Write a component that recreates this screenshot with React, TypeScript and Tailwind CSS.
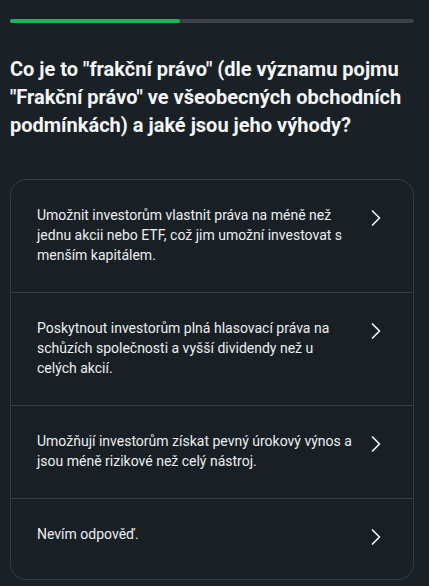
const answers = [
  "Umožnit investorům vlastnit práva na méně než jednu akcii nebo ETF, což jim umožní investovat s menším kapitálem.",
  "Poskytnout investorům plná hlasovací práva na schůzích společnosti a vyšší dividendy než u celých akcií.",
  "Umožňují investorům získat pevný úrokový výnos a jsou méně rizikové než celý nástroj.",
  "Nevím odpověď.",
]

function Chevron() {
  return (
    <svg width="24" height="24" viewBox="0 0 24 24" fill="none" className="mt-px shrink-0">
      <polyline points="8.5,5 15.5,12 8.5,19" stroke="#f1f3f4" strokeWidth="1.7" strokeLinecap="round" strokeLinejoin="round" />
    </svg>
  )
}

export default function App() {
  return (
    <div className="min-h-screen bg-[#1a2126] pl-[10px] pr-[15px] pt-[19px] font-['Roboto',sans-serif]">
      {/* Progress */}
      <div className="h-[4px] w-full rounded-full bg-[#3a4147]">
        <div className="h-full w-[42%] rounded-full bg-[#20b25a]" />
      </div>

      {/* Question */}
      <h1 className="mt-[32px] text-[20px] leading-[28px] font-bold text-[#f4f5f6]">
        Co je to "frakční právo" (dle významu pojmu "Frakční právo" ve všeobecných obchodních podmínkách) a jaké jsou jeho výhody?
      </h1>

      {/* Answers */}
      <div className="mt-[40px] overflow-hidden rounded-[16px] border border-[#343c43] bg-[#182025]">
        {answers.map((a, i) => (
          <button
            key={i}
            className={`flex w-full items-start gap-2 pl-[26px] pr-[25px] pt-[25px] text-left ${
              i > 0 ? "border-t border-[#343c43]" : ""
            } ${i === answers.length - 1 ? "pb-[30px]" : "pb-[27px]"}`}
          >
            <span className="flex-1 text-[14px] leading-[20px] text-[#eceef0]">{a}</span>
            <Chevron />
          </button>
        ))}
      </div>
    </div>
  )
}
